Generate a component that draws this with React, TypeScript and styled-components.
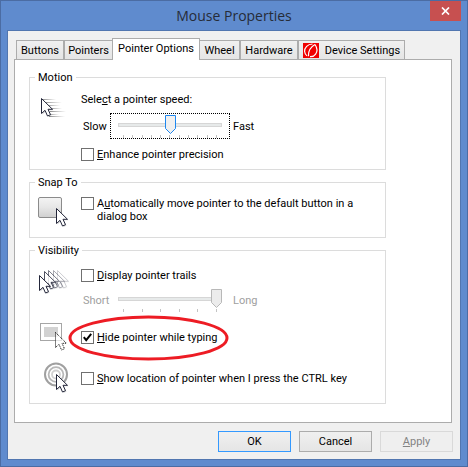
import React, { useState } from "react";
import styled, { createGlobalStyle, css } from "styled-components";

const GlobalStyle = createGlobalStyle`
  * { box-sizing: border-box; }
  body {
    margin: 0;
    color: #000;
    font: 11px/13px Roboto, "Liberation Sans", sans-serif;
  }
`;

const svgUrl = (body: string, w: number, h: number) =>
  `url("data:image/svg+xml,${encodeURIComponent(
    `<svg xmlns="http://www.w3.org/2000/svg" width="${w}" height="${h}" viewBox="0 0 ${w} ${h}">${body}</svg>`
  )}")`;

const thumb = (fill: string, stroke: string) =>
  svgUrl(`<path d="M.5 .5h10v13l-5 5l-5-5z" fill="${fill}" stroke="${stroke}"/>`, 11, 19);

const checkMark = svgUrl(
  `<path d="M1.8 5.2L4.2 8.2L9.2 1.8" fill="none" stroke="#000" stroke-width="2"/>`,
  11,
  11
);

const Window = styled.main`
  display: flex;
  flex-direction: column;
  min-height: 100vh;
  padding: 0 6px 6px;
  background: #5f8bce;
  border: 1px solid #4b6ca3;
`;

const TitleBar = styled.header`
  display: flex;
  align-items: flex-start;
  height: 29px;
`;

const Title = styled.h1`
  flex: 1;
  margin: 0;
  padding-left: 31px;
  text-align: center;
  font: 14px/29px "Open Sans", "Noto Sans", sans-serif;
  color: #262c38;
`;

const CloseButton = styled.button`
  display: flex;
  align-items: center;
  justify-content: center;
  width: 31px;
  height: 20px;
  padding: 0;
  border: 0;
  background: #c75050;
`;

const Client = styled.div`
  flex: 1;
  display: flex;
  flex-direction: column;
  padding: 6px 8px 7px 6px;
  background: #f0f0f0;
  border: 1px solid #5176b0;
`;

const Tabs = styled.div`
  display: flex;
  align-items: flex-end;
  padding-left: 2px;
  height: 22px;
`;

const Tab = styled.button<{ $active?: boolean; $width: number }>`
  display: flex;
  align-items: center;
  justify-content: center;
  gap: 6px;
  width: ${(p) => p.$width}px;
  height: 19px;
  padding: 0;
  border: 1px solid #acacac;
  border-bottom: 0;
  background: linear-gradient(#f0f0f0, #e5e5e5);
  color: #000;
  font: inherit;
  white-space: nowrap;
  ${(p) =>
    p.$active &&
    css`
      height: 22px;
      margin: 0 -1px -1px;
      padding-bottom: 2px;
      background: #fff;
      z-index: 1;
    `}
`;

const Panel = styled.section`
  flex: 1;
  display: flex;
  flex-direction: column;
  gap: 6px;
  padding: 11px 65px 17px 14px;
  background: #fff;
  border: 1px solid #acacac;
`;

const Group = styled.fieldset<{ $bottom: number }>`
  min-width: 0;
  margin: 0;
  padding: 0 8px ${(p) => p.$bottom}px;
  border: 1px solid #dcdcdc;
`;

const Legend = styled.legend`
  margin-left: -3px;
  padding: 0 3px;
`;

const Row = styled.div<{ $top?: number; $height?: number; $center?: boolean }>`
  display: grid;
  grid-template-columns: 43px 1fr;
  align-items: ${(p) => (p.$center ? "center" : "start")};
  margin-top: ${(p) => p.$top ?? 0}px;
  min-height: ${(p) => p.$height ?? 0}px;
`;

const Stack = styled.div<{ $gap: number }>`
  display: flex;
  flex-direction: column;
  gap: ${(p) => p.$gap}px;
`;

const Caption = styled.label`
  display: block;
`;

const CheckLabel = styled.label`
  position: relative;
  display: flex;
  align-items: flex-start;
  gap: 3px;
  max-width: 276px;
`;

const CheckBox = styled.input`
  appearance: none;
  flex: none;
  width: 13px;
  height: 13px;
  margin: 0;
  background: #fff;
  border: 1px solid #707070;
  &:checked {
    background: ${checkMark} center no-repeat;
  }
`;

const SliderRow = styled.div<{ $disabled?: boolean }>`
  display: grid;
  grid-template-columns: 29px 120px auto;
  align-items: center;
  justify-content: start;
  color: ${(p) => (p.$disabled ? "#a0a0a0" : "#000")};
`;

const SliderText = styled.span<{ $end?: boolean }>`
  padding-left: ${(p) => (p.$end ? 3 : 2)}px;
`;

const SliderBox = styled.div<{ $focused?: boolean }>`
  height: 26px;
  padding: 1px 7px 0;
  border: 1px ${(p) => (p.$focused ? "dotted #000" : "solid transparent")};
`;

const Range = styled.input<{ $focused?: boolean }>`
  appearance: none;
  display: block;
  width: 100%;
  height: 19px;
  margin: 0;
  background: linear-gradient(#e7eaea, #e7eaea) center / calc(100% - 2px) 2px no-repeat,
    linear-gradient(#d6d6d6, #d6d6d6) center / 100% 4px no-repeat;
  outline: 0;
  &::-webkit-slider-thumb {
    appearance: none;
    width: 11px;
    height: 19px;
    background: ${(p) => (p.$focused ? thumb("#f0f0f0", "#1e88f0") : thumb("#ececec", "#b8b8b8"))};
  }
`;

const Ticks = styled.div`
  display: flex;
  justify-content: space-between;
  padding: 1px 5px 0;
`;

const Tick = styled.i`
  width: 1px;
  height: 3px;
  background: #c4c4c4;
`;

const Ring = styled.svg`
  position: absolute;
  left: -13px;
  top: -16px;
  pointer-events: none;
`;

const Footer = styled.footer`
  display: flex;
  justify-content: flex-end;
  gap: 8px;
  margin: 8px -1px 0 0;
`;

const PushButton = styled.button<{ $primary?: boolean }>`
  width: 73px;
  height: 21px;
  padding: 0;
  border: 1px solid ${(p) => (p.$primary ? "#3399ff" : "#acacac")};
  background: linear-gradient(#f0f0f0, #e5e5e5);
  color: #000;
  font: inherit;
  &:disabled {
    border-color: #d9d9d9;
    background: #efefef;
    color: #838383;
  }
`;

const ARROW = "M.5 .5V15.5L4 12.3L6.5 18L9.5 16.7L7 11.3H11.5Z";

const Arrow = ({ x, y, opacity = 1 }: { x: number; y: number; opacity?: number }) => (
  <g transform={`translate(${x} ${y})`} opacity={opacity}>
    <path d={ARROW} transform="translate(1 1)" fill="#000" opacity=".15" />
    <path d={ARROW} fill="#fff" stroke="#23263a" />
  </g>
);

const MotionIcon = () => (
  <svg width="34" height="24" aria-hidden="true">
    <defs>
      <linearGradient id="streak">
        <stop offset="0" stopColor="#888" />
        <stop offset="1" stopColor="#999" stopOpacity="0" />
      </linearGradient>
    </defs>
    <g fill="url(#streak)">
      <rect x="4" y="1" width="14" height="1" />
      <rect x="6" y="4" width="18" height="1" />
      <rect x="8" y="7" width="14" height="1" />
      <rect x="11" y="10" width="13" height="1" />
      <rect x="12" y="13" width="16" height="1" />
      <rect x="10" y="16" width="11" height="1" />
      <rect x="11" y="18" width="16" height="1" />
    </g>
    <Arrow x={3} y={0} />
  </svg>
);

const SnapIcon = () => (
  <svg width="34" height="32" aria-hidden="true">
    <defs>
      <linearGradient id="face" x2="0" y2="1">
        <stop offset="0" stopColor="#f4f4f4" />
        <stop offset=".5" stopColor="#e6e6e6" />
        <stop offset="1" stopColor="#cfcfcf" />
      </linearGradient>
    </defs>
    <rect x=".5" y=".5" width="23" height="20" rx="1.5" fill="url(#face)" stroke="#8b8b8b" />
    <Arrow x={18} y={11} />
  </svg>
);

const TrailsIcon = () => (
  <svg width="34" height="28" aria-hidden="true">
    <Arrow x={19} y={1} opacity={0.22} />
    <Arrow x={15} y={1} opacity={0.4} />
    <Arrow x={10} y={1} opacity={0.6} />
    <Arrow x={6} y={2} opacity={0.8} />
    <Arrow x={1} y={6} />
  </svg>
);

const HideIcon = () => (
  <svg width="34" height="30" aria-hidden="true">
    <rect x="2.5" y="1.5" width="21" height="17" fill="#fff" stroke="#a6a6a6" />
    <rect x="6" y="5" width="14" height="10" fill="#d2d2d2" />
    <path
      d={ARROW}
      transform="translate(17 10)"
      fill="#fff"
      fillOpacity=".7"
      stroke="#000"
      strokeDasharray="1 1"
    />
  </svg>
);

const LocateIcon = () => (
  <svg width="34" height="32" aria-hidden="true">
    <g fill="none">
      <circle cx="18" cy="12.5" r="11" stroke="#a0a0a0" strokeWidth="2" />
      <circle cx="18" cy="12.5" r="7.4" stroke="#b8b8b8" strokeWidth="1.8" />
      <circle cx="18" cy="12.5" r="4" stroke="#d0d0d0" strokeWidth="1.8" />
    </g>
    <Arrow x={18} y={12} />
  </svg>
);

const DeviceIcon = () => (
  <svg width="16" height="15" viewBox="0 0 16 15" aria-hidden="true">
    <rect width="16" height="15" fill="#f00000" />
    <g fill="none" stroke="#fff">
      <path d="M9.5 1C4.5 1.2 1.5 4.5 1.6 8.5C1.8 10.5 2.6 11.8 4 12.8" strokeWidth="1.2" />
      <path d="M12 1.5C7.5 4 5.2 7 5.4 13.2" strokeWidth="1.3" />
      <path d="M12 1.5C14.4 5 14.2 9 12.6 11.2C11.4 13 9 13.8 7 13.6" strokeWidth="1.2" />
    </g>
  </svg>
);

type SliderProps = {
  name: string;
  id: string;
  from: string;
  to: string;
  max: number;
  initial: number;
  focused?: boolean;
  disabled?: boolean;
};

function Slider({ name, id, from, to, max, initial, focused, disabled }: SliderProps) {
  const [value, setValue] = useState(initial);
  return (
    <SliderRow $disabled={disabled}>
      <SliderText>{from}</SliderText>
      <SliderBox $focused={focused}>
        <Range
          id={id}
          type="range"
          aria-label={name}
          min={0}
          max={max}
          value={value}
          disabled={disabled}
          $focused={focused}
          onChange={(e) => setValue(Number(e.target.value))}
        />
        <Ticks>
          {Array.from({ length: max + 1 }, (_, i) => (
            <Tick key={i} />
          ))}
        </Ticks>
      </SliderBox>
      <SliderText $end>{to}</SliderText>
    </SliderRow>
  );
}

function Check({ children, checked, ringed }: { children: React.ReactNode; checked?: boolean; ringed?: boolean }) {
  return (
    <CheckLabel>
      <CheckBox type="checkbox" defaultChecked={checked} />
      <span>{children}</span>
      {ringed && (
        <Ring width="162" height="46" aria-hidden="true">
          <ellipse cx="80.5" cy="23" rx="78.5" ry="21" fill="none" stroke="#ed1c24" strokeWidth="3" />
        </Ring>
      )}
    </CheckLabel>
  );
}

export default function App() {
  return (
    <>
      <GlobalStyle />
      <Window>
        <TitleBar>
          <Title>Mouse Properties</Title>
          <CloseButton aria-label="Close">
            <svg width="9" height="8" viewBox="0 0 9 8" aria-hidden="true">
              <path d="M1 .5L8 7.5M8 .5L1 7.5" stroke="#fff" strokeWidth="1.7" />
            </svg>
          </CloseButton>
        </TitleBar>
        <Client>
          <Tabs role="tablist">
            <Tab role="tab" $width={48}>Buttons</Tab>
            <Tab role="tab" $width={49}>Pointers</Tab>
            <Tab role="tab" $width={88} $active aria-selected="true">Pointer Options</Tab>
            <Tab role="tab" $width={41}>Wheel</Tab>
            <Tab role="tab" $width={58}>Hardware</Tab>
            <Tab role="tab" $width={107}>
              <DeviceIcon />
              Device Settings
            </Tab>
          </Tabs>
          <Panel role="tabpanel">
            <Group $bottom={8}>
              <Legend>Motion</Legend>
              <Row $top={9}>
                <Row $top={5}>
                  <MotionIcon />
                </Row>
                <Stack $gap={9}>
                  <Stack $gap={7}>
                    <Caption htmlFor="pointer-speed">
                      Sele<u>c</u>t a pointer speed:
                    </Caption>
                    <Slider id="pointer-speed" name="Pointer speed" from="Slow" to="Fast" max={10} initial={5} focused />
                  </Stack>
                  <Check>
                    <u>E</u>nhance pointer precision
                  </Check>
                </Stack>
              </Row>
            </Group>
            <Group $bottom={0}>
              <Legend>Snap To</Legend>
              <Row $top={8} $height={40}>
                <SnapIcon />
                <Check>
                  A<u>u</u>tomatically move pointer to the default button in a dialog box
                </Check>
              </Row>
            </Group>
            <Group $bottom={9}>
              <Legend>Visibility</Legend>
              <Row $top={12} $height={43}>
                <TrailsIcon />
                <Stack $gap={5}>
                  <Check>
                    <u>D</u>isplay pointer trails
                  </Check>
                  <Slider id="trail-length" name="Trail length" from="Short" to="Long" max={5} initial={5} disabled />
                </Stack>
              </Row>
              <Row $top={9} $height={30} $center>
                <HideIcon />
                <Check checked ringed>
                  <u>H</u>ide pointer while typing
                </Check>
              </Row>
              <Row $top={10} $height={32} $center>
                <LocateIcon />
                <Check>
                  <u>S</u>how location of pointer when I press the CTRL key
                </Check>
              </Row>
            </Group>
          </Panel>
          <Footer>
            <PushButton $primary>OK</PushButton>
            <PushButton>Cancel</PushButton>
            <PushButton disabled>
              <u>A</u>pply
            </PushButton>
          </Footer>
        </Client>
      </Window>
    </>
  );
}
